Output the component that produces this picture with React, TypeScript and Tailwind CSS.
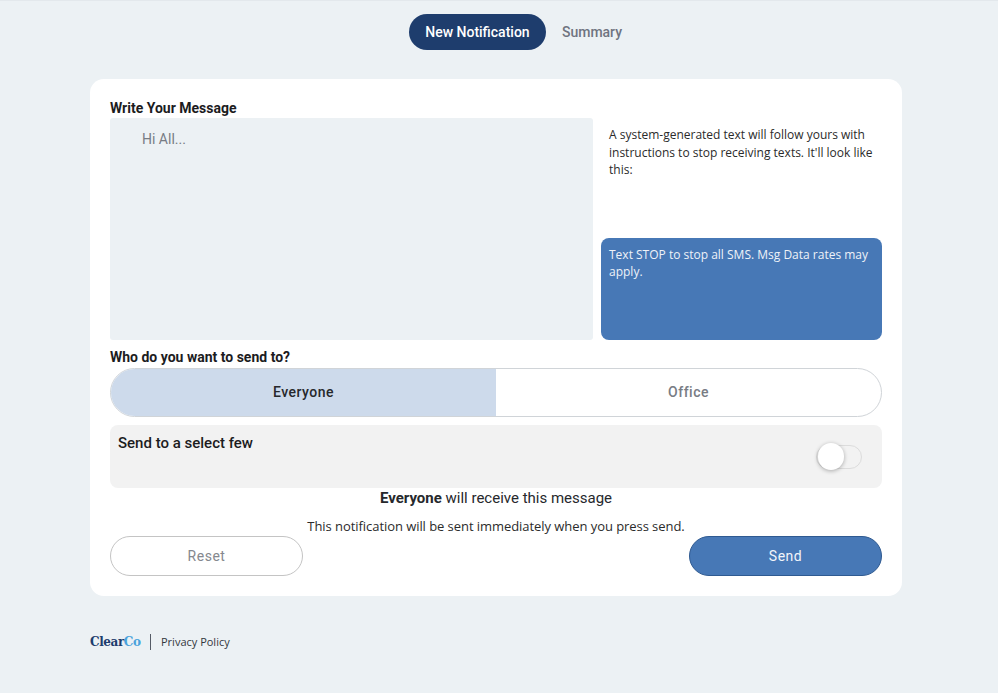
export default function App() {
  return (
    <div className="min-h-[693px] bg-[#ecf1f4] border-t border-[#e3e8ec] font-['Roboto',sans-serif] text-[#1c1c1e]">
      <nav className="flex justify-center items-center gap-4 pt-[13px] pl-[33px]">
        <button className="h-9 w-[137px] rounded-full bg-[#1e3d6d] text-white text-sm font-medium">
          New Notification
        </button>
        <button className="text-sm font-medium text-[#6f7480]">Summary</button>
      </nav>

      <main className="mt-[29px] ml-[90px] mr-[96px] h-[517px] bg-white rounded-[14px] px-5 pt-[21px]">
        <h2 className="text-sm font-bold leading-[17px]">Write Your Message</h2>
        <div className="flex gap-2 h-[222px] mt-px">
          <div className="w-[483px] bg-[#ecf1f4] rounded-[3px] pl-8 pt-[13px] text-sm leading-4 text-[#777c84]">
            Hi All...
          </div>
          <div className="flex-1 flex flex-col justify-between">
            <p className="pt-2 pl-2 text-xs leading-[17.6px] font-['Open_Sans',sans-serif] text-[#2b2b2b]">
              A system-generated text will follow yours with instructions to stop receiving texts. It'll look like this:
            </p>
            <div className="h-[102px] rounded-lg bg-[#4778b6] px-2 pt-2 text-xs leading-[17px] text-[#eef2f8] font-['Open_Sans',sans-serif]">
              Text STOP to stop all SMS. Msg Data rates may apply.
            </div>
          </div>
        </div>

        <h2 className="mt-2 text-sm font-bold leading-[18px]">Who do you want to send to?</h2>
        <div className="mt-[2px] flex h-[49px] rounded-full border border-[#d0d4d8] overflow-hidden">
          <div className="w-[385px] bg-[#cddaeb] flex items-center justify-center text-sm font-medium tracking-[0.5px] text-[#26282c] pb-px">
            Everyone
          </div>
          <div className="flex-1 flex items-center justify-center text-sm font-medium tracking-[0.5px] text-[#787c84] pb-px">
            Office
          </div>
        </div>

        <div className="mt-2 h-[63px] rounded-lg bg-[#f2f2f2] flex justify-between pl-2 pr-5">
          <span className="pt-[9px] text-[15px] leading-[18px] font-medium">Send to a select few</span>
          <div className="mt-5 relative w-[33px] h-6">
            <div className="h-6 w-[46px] -ml-[13px] rounded-full border border-[#dcdcdc] bg-[#f2f2f2]"></div>
            <div className="absolute -top-[2px] -left-[11px] w-[26px] h-[27px] rounded-full bg-white shadow-[0_1px_4px_rgba(0,0,0,0.3)]"></div>
          </div>
        </div>

        <p className="text-center text-[15px] leading-5 text-[#26282c]">
          <span className="font-bold">Everyone</span> will receive this message
        </p>
        <p className="mt-[9px] text-center text-[13px] leading-[18px] tracking-[-0.06px] font-['Open_Sans',sans-serif] text-[#2b2b2b]">
          This notification will be sent immediately when you press send.
        </p>

        <div className="flex justify-between mt-px">
          <button className="w-[193px] h-10 rounded-full border border-[#c4c4c4] bg-white text-sm tracking-[0.5px] text-[#85888e] pb-px">
            Reset
          </button>
          <button className="w-[193px] h-10 rounded-full border border-[#2f5a91] bg-[#4778b6] text-sm tracking-[0.5px] text-[#f2f5fa] pb-px">
            Send
          </button>
        </div>
      </main>

      <footer className="mt-[38px] ml-[90px] flex items-center h-4">
        <span className="w-[51px] font-['DejaVu_Serif',serif] font-bold text-xs leading-4 tracking-[-0.4px] text-[#1e3d6d]">
          Clear<span className="text-[#4aa3dc]">Co</span>
        </span>
        <span className="ml-[9px] h-4 w-px bg-[#555b66]"></span>
        <a className="ml-[10px] text-[11px] font-['Open_Sans',sans-serif] text-[#33373d]">Privacy Policy</a>
      </footer>
    </div>
  );
}
